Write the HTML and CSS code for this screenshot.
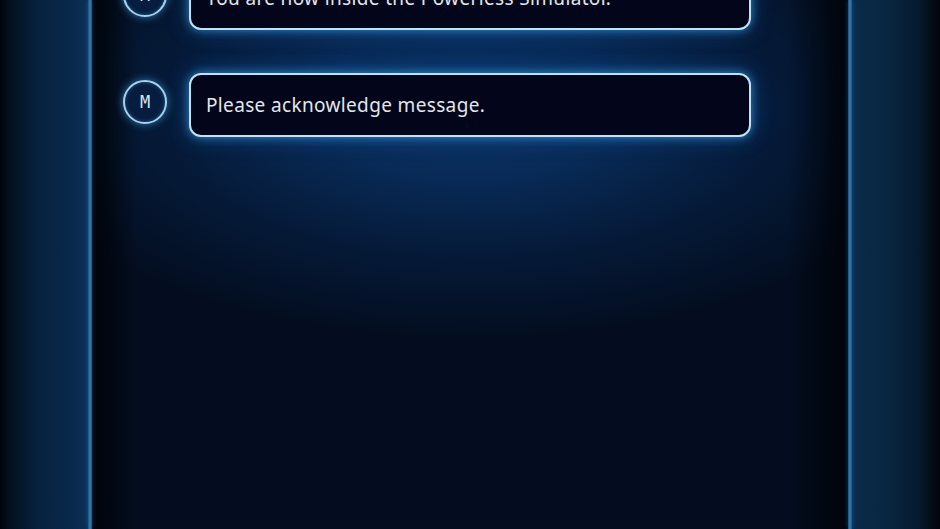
FILE: index.html
```html
<!DOCTYPE html>
<html lang="en">
<head>
    <meta charset="UTF-8">
    <meta name="viewport" content="width=device-width, initial-scale=1.0">
    <title>Powerless Simulator - Messages</title>
    <link rel="stylesheet" href="styles.css">
</head>
<body>
    <div class="frame">
        <div class="rail rail-left"></div>
        <div class="edge"></div>

        <main class="screen">
            <div class="chat">
                <!-- Message from M -->
                <div class="message">
                    <div class="avatar">M</div>
                    <div class="bubble">You are now inside the Powerless Simulator.</div>
                </div>

                <div class="message">
                    <div class="avatar">M</div>
                    <div class="bubble">Please acknowledge message.</div>
                </div>
            </div>
        </main>

        <div class="edge"></div>
        <div class="rail rail-right"></div>
    </div>
</body>
</html>
```

FILE: styles.css
```css
body {
    margin: 0;
    background: #01050c;
    font-family: "Noto Sans", "Open Sans", sans-serif;
    color: #e2e6ec;
    overflow: hidden;
}

.frame {
    display: flex;
    height: 529px;
    width: 940px;
}

.rail {
    height: 100%;
}

.rail-left {
    width: 88px;
    background: linear-gradient(to right, #01040a 0%, #03111f 12%, #072240 45%, #092a4c 85%, #0b3056 100%);
}

.rail-right {
    width: 88px;
    background: linear-gradient(to right, #0a2c4a 0%, #082640 40%, #061a2e 75%, #010409 100%);
}

.edge {
    width: 4px;
    height: 100%;
    background: linear-gradient(to right, #174f7e, #3a80b4, #174f7e);
    box-shadow: 0 0 5px rgba(40, 120, 190, 0.5);
    position: relative;
    z-index: 1;
}

.screen {
    flex: 1;
    height: 100%;
    background:
        linear-gradient(to right, rgba(0, 3, 8, 0.95) 0%, rgba(0, 3, 8, 0) 6%, rgba(0, 3, 8, 0) 92%, rgba(0, 3, 8, 0.95) 100%),
        radial-gradient(ellipse 64% 44% at 50% 20%, #0b3468 0%, #082a56 32%, #051a38 64%, #030d1f 100%),
        #020a16;
    overflow: hidden;
}

.chat {
    display: flex;
    flex-direction: column;
    gap: 43px;
    margin-top: -34px;
    padding-left: 31px;
}

.message {
    display: flex;
    align-items: center;
    gap: 22px;
}

.avatar {
    width: 40px;
    height: 40px;
    border: 2px solid #a4d2ea;
    border-radius: 50%;
    background: #061d40;
    box-shadow: 0 0 8px rgba(70, 160, 230, 0.7), inset 0 0 4px rgba(70, 160, 230, 0.4);
    display: flex;
    justify-content: center;
    align-items: center;
    font-family: "DejaVu Sans Mono", monospace;
    font-size: 17px;
    color: #d4e8f4;
    margin-top: -6px;
}

.bubble {
    width: 543px;
    height: 60px;
    padding-left: 15px;
    display: flex;
    align-items: center;
    border: 2px solid #bfe2f4;
    border-radius: 12px;
    background: #03061a;
    box-shadow: 0 0 10px rgba(60, 160, 230, 0.75), 0 0 22px rgba(30, 110, 200, 0.45);
    font-size: 19px;
    letter-spacing: 0.35px;
}
```
